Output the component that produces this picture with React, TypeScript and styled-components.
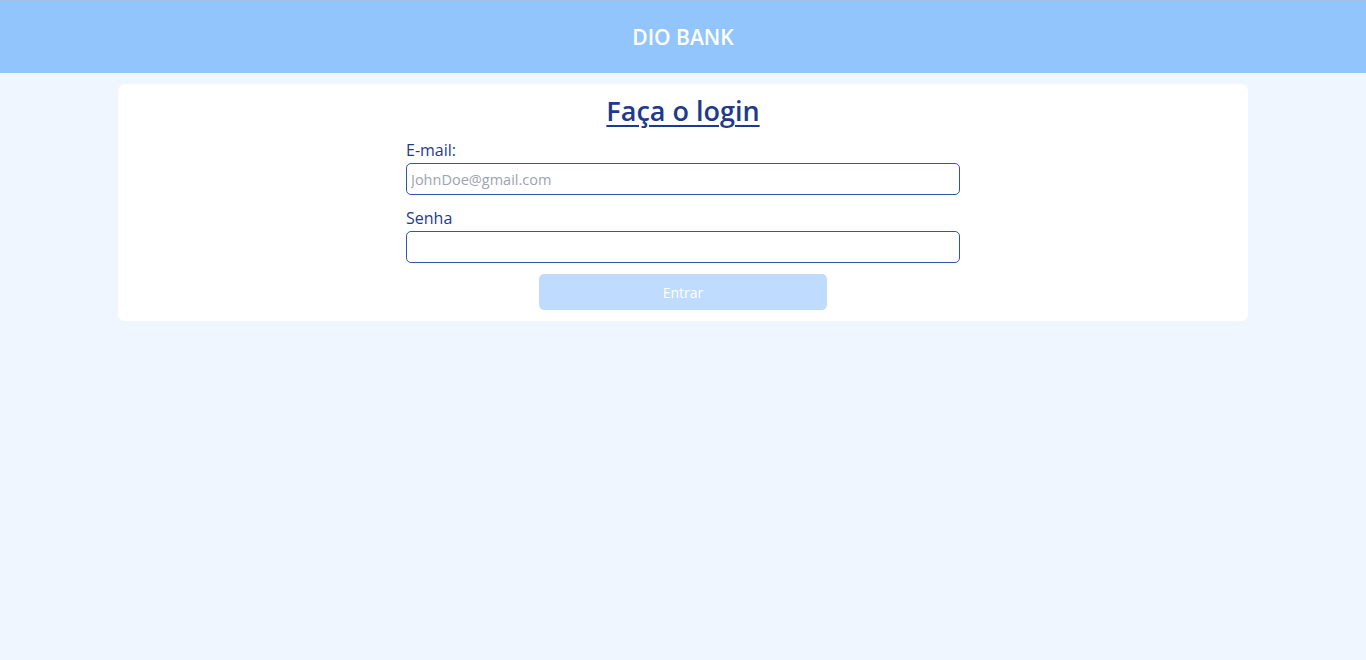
import React from "react";
import styled, { createGlobalStyle } from "styled-components";

const Global = createGlobalStyle`
  html, body { margin: 0; padding: 0; }
  body {
    background: #EFF6FF;
    font-family: "Open Sans", "Noto Sans", sans-serif;
    min-height: 100vh;
  }
  * { box-sizing: border-box; }
`;

const Header = styled.header`
  height: 73px;
  background: #93C5FD;
  border-top: 1px solid #A3BFE8;
  display: flex;
  align-items: center;
  justify-content: center;
`;

const Brand = styled.h1`
  margin: 0;
  color: #ffffff;
  font-size: 21px;
  font-weight: 600;
  line-height: 28px;
`;

const Main = styled.main`
  display: flex;
  justify-content: center;
  padding-top: 11px;
`;

const Card = styled.section`
  width: 1130px;
  background: #ffffff;
  border-radius: 7px;
  padding: 10px 0 11px;
  display: flex;
  flex-direction: column;
  align-items: center;
`;

const Title = styled.h2`
  margin: 0 0 10px;
  color: #1E3A8A;
  font-size: 27px;
  font-weight: 600;
  line-height: 34px;
  text-decoration: underline;
  text-decoration-thickness: 2px;
  text-underline-offset: 4px;
`;

const Form = styled.form`
  width: 554px;
  display: flex;
  flex-direction: column;
`;

const Field = styled.div<{ $mb: number }>`
  display: flex;
  flex-direction: column;
  margin-bottom: ${(p) => p.$mb}px;
`;

const Label = styled.label`
  color: #1E3A8A;
  font-size: 16px;
  line-height: 24px;
  margin-bottom: 1px;
`;

const Input = styled.input`
  height: 32px;
  width: 100%;
  border: 1px solid #2F55B0;
  border-radius: 5px;
  padding: 0 4px;
  font-family: "Open Sans", "Noto Sans", sans-serif;
  font-size: 14.5px;
  color: #1E3A8A;
  background: #fff;
  outline: none;
  &::placeholder { color: #9CA3AF; }
`;

const Button = styled.button`
  align-self: center;
  width: 288px;
  height: 36px;
  border: none;
  border-radius: 5px;
  background: #BFDBFE;
  color: #ffffff;
  font-family: "Open Sans", "Noto Sans", sans-serif;
  font-size: 14px;
  cursor: not-allowed;
`;

export default function App() {
  return (
    <>
      <Global />
      <Header>
        <Brand>DIO BANK</Brand>
      </Header>
      <Main>
        <Card>
          <Title>Faça o login</Title>
          <Form onSubmit={(e) => e.preventDefault()}>
            <Field $mb={11}>
              <Label htmlFor="email">E-mail:</Label>
              <Input id="email" type="email" placeholder="JohnDoe@gmail.com" />
            </Field>
            <Field $mb={11}>
              <Label htmlFor="senha">Senha</Label>
              <Input id="senha" type="password" />
            </Field>
            <Button type="submit" disabled>Entrar</Button>
          </Form>
        </Card>
      </Main>
    </>
  );
}
